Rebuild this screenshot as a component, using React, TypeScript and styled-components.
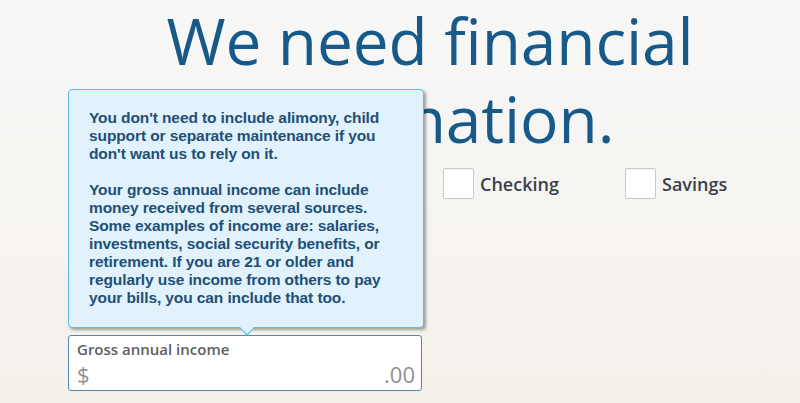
import React from 'react'
import styled, { createGlobalStyle } from 'styled-components'

const GlobalStyle = createGlobalStyle`
  html, body {
    margin: 0;
    padding: 0;
  }
  body {
    width: 800px;
    height: 403px;
    overflow: hidden;
    background: linear-gradient(180deg, #f7f7f6 0%, #f6f4f1 55%, #f5f0ea 100%);
    font-family: 'Open Sans', 'Liberation Sans', sans-serif;
  }
`

const Page = styled.main`
  width: 800px;
  height: 403px;
  display: flex;
  flex-direction: column;
`

const Heading = styled.h1`
  margin: 2px 0 0 60px;
  width: 740px;
  text-align: center;
  font-family: 'Open Sans', sans-serif;
  font-weight: 400;
  font-size: 64px;
  line-height: 78px;
  color: #175a8a;
  letter-spacing: -0.1px;
`

const Form = styled.div`
  display: flex;
  flex-direction: column;
  padding-left: 68px;
`

const CheckRow = styled.div`
  display: flex;
  margin: 10px 0 0 375px;
`

const CheckItem = styled.label`
  flex: 0 0 182px;
  display: flex;
  align-items: center;
  gap: 6px;
  font-family: 'Open Sans', sans-serif;
  font-weight: 600;
  font-size: 18px;
  color: #3b3f4b;
`

const Box = styled.span`
  width: 31px;
  height: 31px;
  box-sizing: border-box;
  background: #fff;
  border: 1px solid #c9c9c9;
  border-radius: 2px;
  box-shadow: inset 0 1px 1px rgba(0, 0, 0, 0.04);
`

const FieldWrap = styled.div`
  position: relative;
  margin-top: 136px;
  width: 354px;
`

const Field = styled.div`
  box-sizing: border-box;
  height: 56px;
  background: #fff;
  border: 1px solid #5485ad;
  border-radius: 3px;
  padding: 2px 6px 0 8px;
  display: flex;
  flex-direction: column;
`

const FieldLabel = styled.span`
  font-family: 'Open Sans', sans-serif;
  font-weight: 600;
  font-size: 15px;
  line-height: 22px;
  color: #5e5e5e;
`

const Amount = styled.div`
  display: flex;
  justify-content: space-between;
  font-family: 'Open Sans', sans-serif;
  font-size: 22px;
  line-height: 28px;
  color: #909090;
`

const Tooltip = styled.div`
  position: absolute;
  left: 0;
  bottom: calc(100% + 7px);
  width: 356px;
  box-sizing: border-box;
  padding: 19px 6px 20px 20px;
  background: #e1f2fd;
  border: 1px solid #62b9ec;
  border-radius: 4px;
  box-shadow: 2px 2px 3px rgba(0, 0, 0, 0.35);
  font-family: 'Liberation Sans', Arial, sans-serif;
  font-weight: 700;
  font-size: 15.5px;
  line-height: 18px;
  letter-spacing: -0.1px;
  color: #214f76;

  &::before,
  &::after {
    content: '';
    position: absolute;
    left: 170px;
    width: 0;
    height: 0;
    border-left: 8px solid transparent;
    border-right: 8px solid transparent;
  }

  &::before {
    bottom: -9px;
    border-top: 9px solid #62b9ec;
  }

  &::after {
    bottom: -7px;
    border-top: 8px solid #e1f2fd;
  }

  p {
    margin: 0;
    white-space: nowrap;
  }

  p + p {
    margin-top: 18px;
  }
`

const App: React.FC = () => {
  return (
    <>
      <GlobalStyle />
      <Page>
        <Heading>We need financial information.</Heading>
        <Form>
          <CheckRow>
            <CheckItem>
              <Box />
              Checking
            </CheckItem>
            <CheckItem>
              <Box />
              Savings
            </CheckItem>
          </CheckRow>
          <FieldWrap>
            <Tooltip>
              <p>
                You don't need to include alimony, child
                <br />
                support or separate maintenance if you
                <br />
                don't want us to rely on it.
              </p>
              <p>
                Your gross annual income can include
                <br />
                money received from several sources.
                <br />
                Some examples of income are: salaries,
                <br />
                investments, social security benefits, or
                <br />
                retirement. If you are 21 or older and
                <br />
                regularly use income from others to pay
                <br />
                your bills, you can include that too.
              </p>
            </Tooltip>
            <Field>
              <FieldLabel>Gross annual income</FieldLabel>
              <Amount>
                <span>$</span>
                <span>.00</span>
              </Amount>
            </Field>
          </FieldWrap>
        </Form>
      </Page>
    </>
  )
}

export default App
